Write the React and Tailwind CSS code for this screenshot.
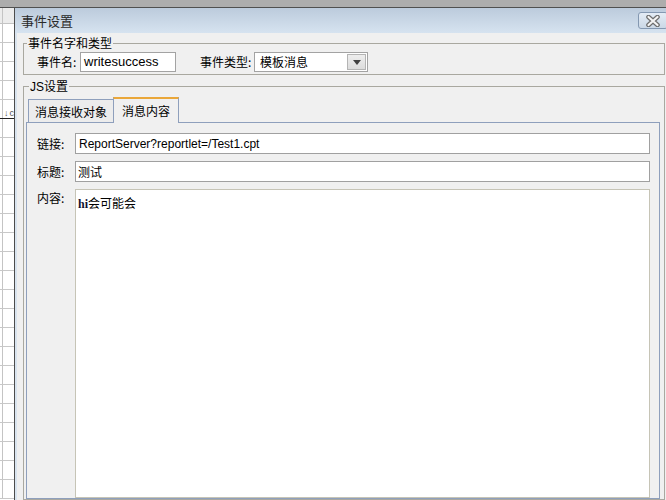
const CloseIcon = () => (
  <svg width="16" height="12" viewBox="0 0 16 12">
    <path d="M3.5 2 L12.5 10 M12.5 2 L3.5 10" stroke="#6e6e6e" strokeWidth="4.6" strokeLinecap="round" />
    <path d="M3.5 2 L12.5 10 M12.5 2 L3.5 10" stroke="#f4f4f4" strokeWidth="2.2" strokeLinecap="round" />
  </svg>
);

const GridBackground = () => {
  const rows = Array.from({ length: 25 });
  return (
    <div className="flex flex-col">
      <div className="h-[8px] bg-[#adadad] border-b border-[#505050]" />
      <div className="flex h-[16px] bg-[#ececec] border-b border-[#c4c4c4]">
        <div className="w-[3px] border-r border-[#c4c4c4]" />
      </div>
      {rows.map((_, i) => (
        <div
          key={i}
          className={`flex h-[19px] border-b ${i === 4 ? "border-[#202020]" : "border-[#c8c8c8]"}`}
        >
          <div className="w-[3px] border-r border-[#c4c4c4]" />
          {i === 4 && (
            <div className="flex items-end gap-[1px] pl-[1px] text-[9px] leading-[10px] text-[#555]">
              <span>↓</span>
              <span>c</span>
            </div>
          )}
        </div>
      ))}
    </div>
  );
};

export default function App() {
  return (
    <div className="relative w-[666px] h-[500px] overflow-hidden bg-white font-['Liberation_Sans','Noto_Sans_CJK_SC',sans-serif] text-black">
      <GridBackground />

      {/* dialog window */}
      <div className="absolute left-[14px] top-[8px] w-[660px] h-[492px] flex flex-col border-l border-[#4c4c4c] bg-[#f0f0f0]">
        <div className="h-[25px] flex items-center pl-[6px] bg-gradient-to-b from-[#bccbdc] to-[#d6e3f0]">
          <span className="text-[13px] leading-[16px] text-[#2a2a2a] font-['Noto_Sans_CJK_SC',sans-serif]">事件设置</span>
          <div className="ml-auto mr-[6px] w-[30px] h-[17px] flex items-center justify-center rounded-[3px] border border-[#8498b1] bg-gradient-to-b from-[#e4ecf5] to-[#cbd8e6]">
            <CloseIcon />
          </div>
        </div>

        <div className="flex-1 flex flex-col border-l-2 border-[#d9e4ef] pl-[6px] pr-[9px] pt-[2px] text-[12px] font-['Noto_Sans_CJK_SC',sans-serif]">
          {/* group 1 */}
          <fieldset className="border border-[#a9a8a0] pb-[2px]">
            <legend className="ml-[3px] px-[1px] leading-[16px] text-[12px]">事件名字和类型</legend>
            <div className="flex items-center pt-[1px] pl-[13px]">
              <span className="w-[43px] leading-[16px]">事件名:</span>
              <div className="w-[96px] h-[20px] flex items-center border border-[#a3a3a3] bg-white pl-[3px] text-[13px] font-['Liberation_Sans',sans-serif]">
                writesuccess
              </div>
              <span className="ml-[24px] w-[54px] leading-[16px]">事件类型:</span>
              <div className="w-[114px] h-[20px] flex border border-[#a3a3a3] bg-white">
                <span className="flex-1 pl-[5px] leading-[18px]">模板消息</span>
                <div className="w-[19px] my-[1px] mr-[1px] flex items-center justify-center border border-[#b4b4b4] bg-gradient-to-b from-[#eeeeee] to-[#dcdcdc]">
                  <svg width="8" height="5" viewBox="0 0 8 5">
                    <path d="M0 0 H8 L4 5 Z" fill="#404040" />
                  </svg>
                </div>
              </div>
            </div>
          </fieldset>

          {/* group 2 */}
          <fieldset className="mt-[3px] flex-1 flex flex-col border border-[#a9a8a0] pl-[2px] pr-[4px]">
            <legend className="ml-[3px] px-[1px] leading-[16px] text-[12px]">
              <span className="font-['Liberation_Sans',sans-serif]">JS</span>设置
            </legend>
            <div className="flex items-end pt-[2px] pl-[2px]">
              <div className="w-[86px] h-[23px] flex items-center justify-center border-t border-l border-r border-[#8e9fbc] bg-[#ececec] pt-[1px]">
                消息接收对象
              </div>
              <div className="relative z-10 -ml-[1px] -mb-[1px] w-[66px] h-[26px] flex items-center justify-center border-t-2 border-t-[#eaa73a] border-l border-r border-[#8e9fbc] bg-[#f0f0f0]">
                消息内容
              </div>
            </div>
            <div className="flex-1 flex flex-col gap-[7px] border border-[#8e9fbc] pt-[10px] pl-[10px] pr-[9px]">
              <div className="flex items-center">
                <span className="w-[38px] leading-[16px]">链接:</span>
                <div className="flex-1 h-[21px] flex items-center border border-[#a0a0a0] bg-white pl-[3px] font-['Liberation_Sans',sans-serif]">
                  ReportServer?reportlet=/Test1.cpt
                </div>
              </div>
              <div className="flex items-center">
                <span className="w-[38px] leading-[16px]">标题:</span>
                <div className="flex-1 h-[21px] flex items-center border border-[#a0a0a0] bg-white pl-[2px] leading-[16px]">
                  测试
                </div>
              </div>
              <div className="flex-1 flex">
                <span className="w-[38px] pt-[1px] leading-[16px]">内容:</span>
                <div className="flex-1 border border-[#c6c4b6] bg-white pl-[2px] pt-[5px] leading-[16px]">
                  <span className="font-['Liberation_Serif',serif] font-bold text-[#101030]">hi</span>会可能会
                </div>
              </div>
            </div>
          </fieldset>
        </div>
      </div>
    </div>
  );
}
